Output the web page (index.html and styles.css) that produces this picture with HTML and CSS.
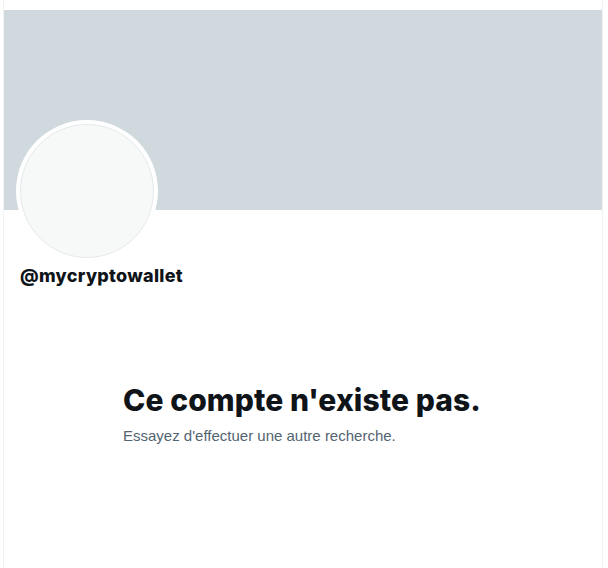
FILE: index.html
```html
<!DOCTYPE html>
<html lang="fr">
<head>
<meta charset="utf-8">
<title>@mycryptowallet</title>
<link rel="stylesheet" href="styles.css">
</head>
<body>
<main class="column">
  <div class="banner"></div>
  <section class="profile">
    <div class="avatar"><div class="avatar-inner"></div></div>
    <div class="handle">@mycryptowallet</div>
  </section>
  <section class="empty">
    <h1 class="empty-title">Ce compte n'existe pas.</h1>
    <p class="empty-text">Essayez d'effectuer une autre recherche.</p>
  </section>
</main>
</body>
</html>
```

FILE: styles.css
```css
html, body {
  margin: 0;
  padding: 0;
  background: #ffffff;
}
body {
  font-family: "Liberation Sans", Arial, sans-serif;
  color: #0f1419;
}
.column {
  box-sizing: border-box;
  width: 600px;
  margin-left: 3px;
  min-height: 100vh;
  padding-top: 10px;
  border-left: 1px solid #eff3f4;
  border-right: 1px solid #eff3f4;
}
.banner {
  height: 200px;
  background: #cfd9de;
}
.profile {
  padding: 0 16px 0 12px;
}
.avatar {
  width: 142px;
  height: 142px;
  margin-top: -90px;
  border-radius: 50%;
  background: #ffffff;
  padding: 4px;
  box-sizing: border-box;
}
.avatar-inner {
  width: 100%;
  height: 100%;
  box-sizing: border-box;
  border-radius: 50%;
  background: #f7f9f9;
  border: 1px solid #e6e9ea;
}
.handle {
  margin-top: 2px;
  padding-left: 4px;
  font-family: Inter, "Liberation Sans", sans-serif;
  font-size: 18px;
  line-height: 24px;
  font-weight: 800;
  letter-spacing: 0.3px;
}
.empty {
  box-sizing: border-box;
  max-width: 400px;
  margin: 94px auto 0;
  padding: 0 20px;
}
.empty-title {
  margin: 0;
  font-family: Inter, "Liberation Sans", sans-serif;
  font-size: 30px;
  line-height: 36px;
  font-weight: 800;
  letter-spacing: 0.1px;
  white-space: nowrap;
}
.empty-text {
  margin: 8px 0 0;
  font-size: 15px;
  line-height: 20px;
  color: #536471;
}
```
